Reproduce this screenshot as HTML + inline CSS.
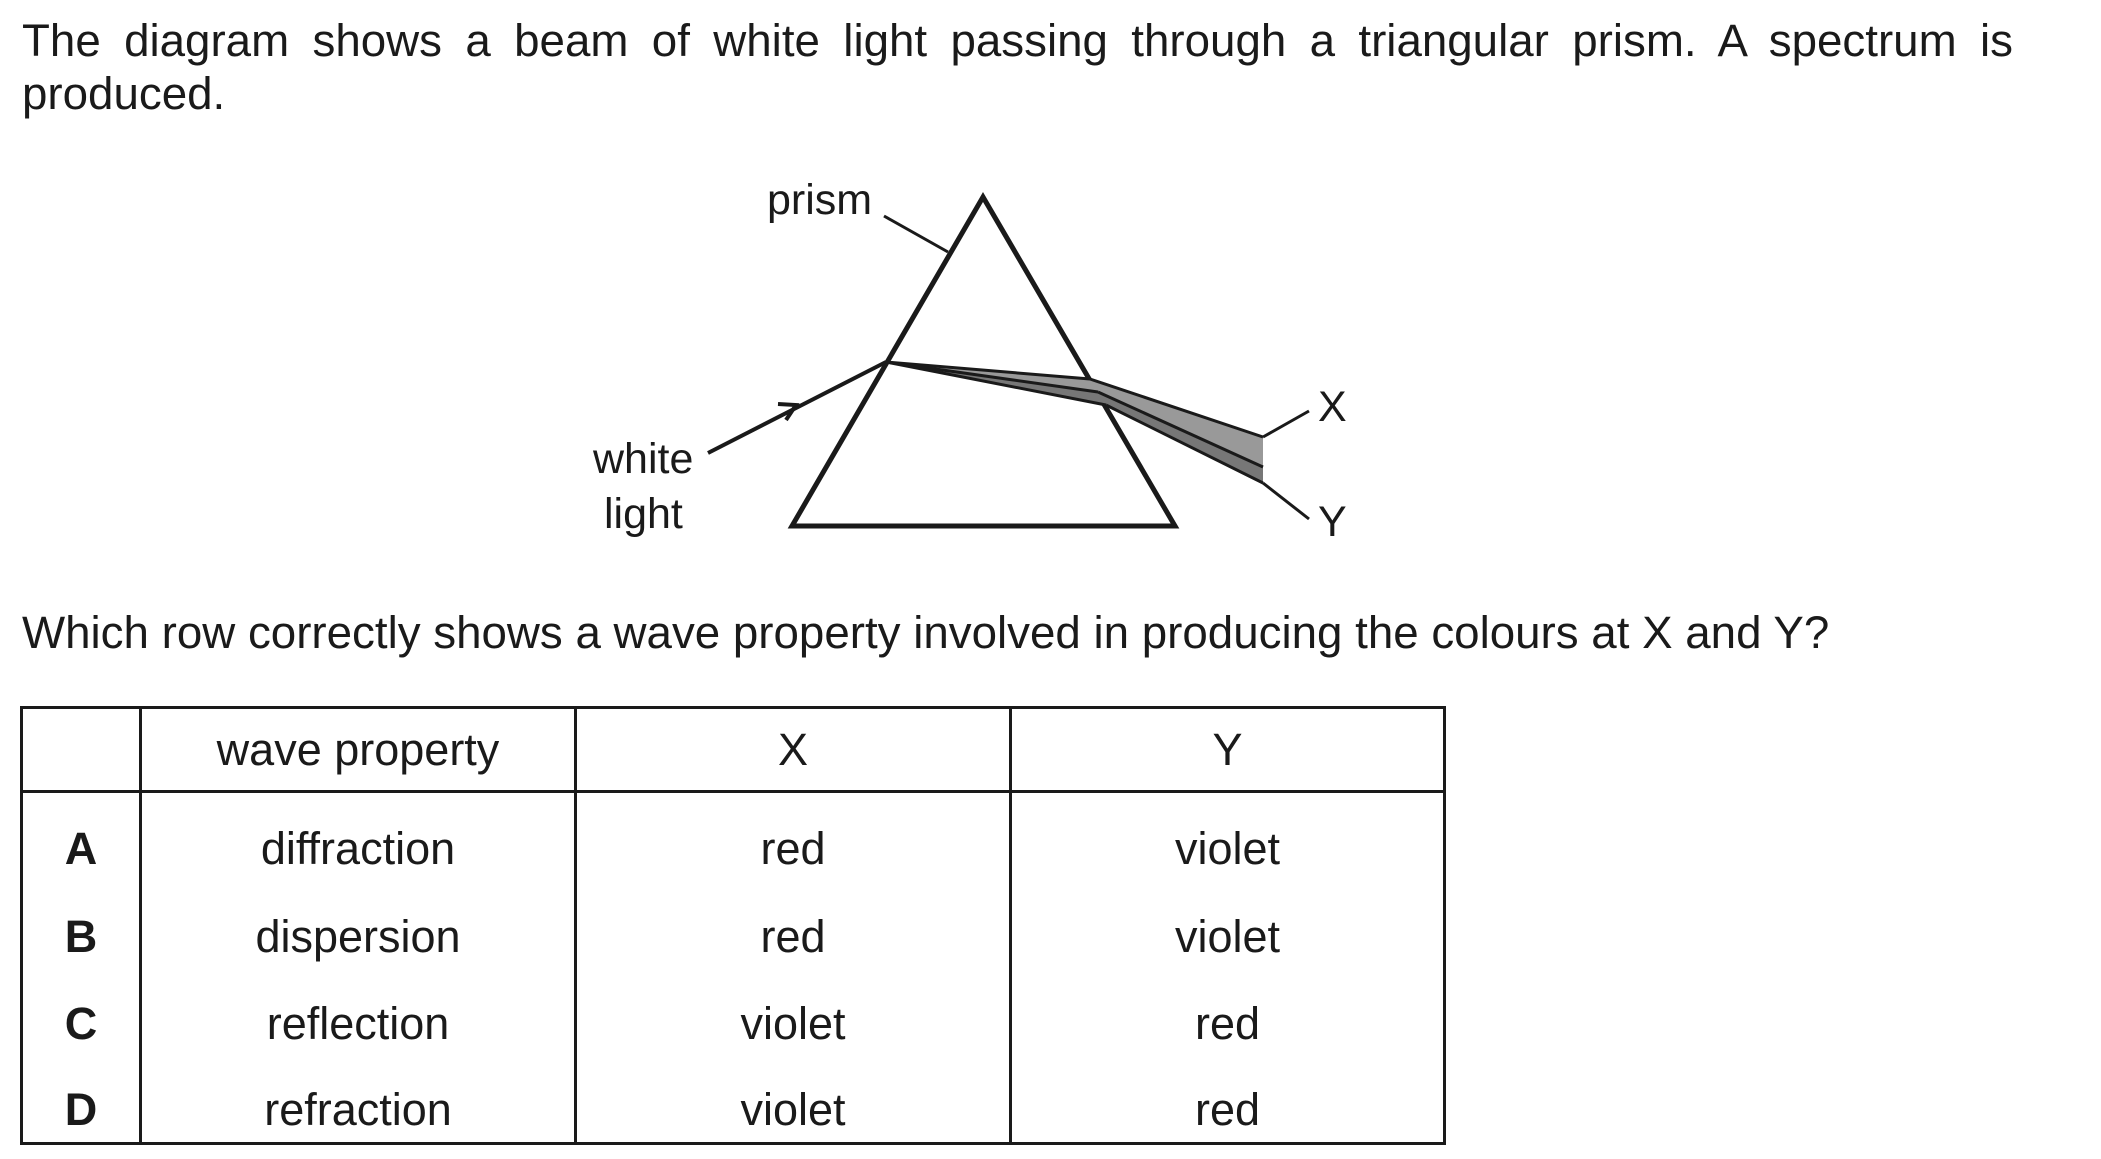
<!DOCTYPE html>
<html><head><meta charset="utf-8"><style>
body{margin:0;width:2101px;height:1159px;background:#fff;overflow:hidden;font-family:"Liberation Sans",Arial,sans-serif;color:#1a1a1a;position:relative}
.t{position:absolute;font-size:45.7px;line-height:54px;white-space:nowrap}
.p1{left:22px;top:14px;width:1991px;text-align:justify;text-align-last:justify;white-space:normal}
td{border:3px solid #1a1a1a;text-align:center;font-size:45px;padding:0;box-sizing:border-box}
</style></head><body>
<div class="t p1">The diagram shows a beam of white light passing through a triangular prism. A spectrum is</div>
<div class="t" style="left:22px;top:67px">produced.</div>
<svg style="position:absolute;left:0;top:0" width="2101" height="700">
<g stroke="#1a1a1a" stroke-width="4" fill="none">
<polygon points="983,197 792,526 1175,526" stroke-width="5"/>
<line x1="884" y1="216" x2="948" y2="252" stroke-width="3"/>
<line x1="708" y1="453" x2="886" y2="362"/>
<polyline points="778,404 796,405 786,420"/>
</g>
<polygon points="886,362 1090,379 1263,437 1263,483 1106,405" fill="#999"/>
<polygon points="886,362 1098,392 1263,467 1263,483 1106,405" fill="#777"/>
<g stroke="#1a1a1a" stroke-width="3" fill="none">
<line x1="886" y1="362" x2="1090" y2="379"/><line x1="1090" y1="379" x2="1263" y2="437"/>
<line x1="886" y1="362" x2="1098" y2="392"/><line x1="1098" y1="392" x2="1263" y2="467"/>
<line x1="886" y1="362" x2="1106" y2="405"/><line x1="1106" y1="405" x2="1263" y2="483"/>
<line x1="1263" y1="437" x2="1309" y2="411"/><line x1="1263" y1="483" x2="1309" y2="519"/>
</g>
<g font-family="Liberation Sans,Arial,sans-serif" font-size="43" fill="#1a1a1a">
<text x="767" y="214">prism</text>
<text x="593" y="473">white</text>
<text x="604" y="528">light</text>
<text x="1318" y="421">X</text>
<text x="1318" y="536">Y</text>
</g>
</svg>
<div class="t" style="left:22px;top:606px">Which row correctly shows a wave property involved in producing the colours at X and Y?</div>
<table style="position:absolute;left:20px;top:706px;width:1423px;border-collapse:collapse;table-layout:fixed">
<colgroup><col style="width:119px"><col style="width:435px"><col style="width:435px"><col style="width:434px"></colgroup>
<tr style="height:84px"><td></td><td>wave property</td><td>X</td><td>Y</td></tr>
<tr style="height:101px"><td style="border-bottom:0;font-weight:bold;padding-top:12px">A</td><td style="border-bottom:0;padding-top:12px">diffraction</td><td style="border-bottom:0;padding-top:12px">red</td><td style="border-bottom:0;padding-top:12px">violet</td></tr>
<tr style="height:88px"><td style="border-top:0;border-bottom:0;font-weight:bold">B</td><td style="border-top:0;border-bottom:0">dispersion</td><td style="border-top:0;border-bottom:0">red</td><td style="border-top:0;border-bottom:0">violet</td></tr>
<tr style="height:87px"><td style="border-top:0;border-bottom:0;font-weight:bold">C</td><td style="border-top:0;border-bottom:0">reflection</td><td style="border-top:0;border-bottom:0">violet</td><td style="border-top:0;border-bottom:0">red</td></tr>
<tr style="height:76px"><td style="border-top:0;font-weight:bold;padding-top:10px">D</td><td style="border-top:0;padding-top:10px">refraction</td><td style="border-top:0;padding-top:10px">violet</td><td style="border-top:0;padding-top:10px">red</td></tr>
</table>
</body></html>
